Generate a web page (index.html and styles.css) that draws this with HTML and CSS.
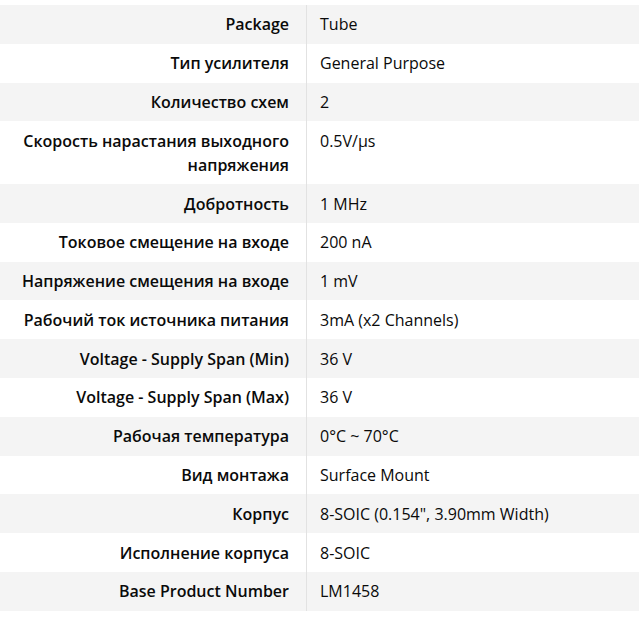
FILE: index.html
```html
<!DOCTYPE html>
<html lang="ru">
<head>
<meta charset="utf-8">
<link rel="stylesheet" href="styles.css">
</head>
<body>
<div class="wrap">
<table class="specs">
<tbody>
<tr><th>Package</th><td>Tube</td></tr>
<tr><th>Тип усилителя</th><td>General Purpose</td></tr>
<tr><th>Количество схем</th><td>2</td></tr>
<tr><th>Скорость нарастания выходного напряжения</th><td>0.5V/µs</td></tr>
<tr><th>Добротность</th><td>1 MHz</td></tr>
<tr><th>Токовое смещение на входе</th><td>200 nA</td></tr>
<tr><th>Напряжение смещения на входе</th><td>1 mV</td></tr>
<tr><th>Рабочий ток источника питания</th><td>3mA (x2 Channels)</td></tr>
<tr><th>Voltage - Supply Span (Min)</th><td>36 V</td></tr>
<tr><th>Voltage - Supply Span (Max)</th><td>36 V</td></tr>
<tr><th>Рабочая температура</th><td>0°C ~ 70°C</td></tr>
<tr><th>Вид монтажа</th><td>Surface Mount</td></tr>
<tr><th>Корпус</th><td>8-SOIC (0.154", 3.90mm Width)</td></tr>
<tr><th>Исполнение корпуса</th><td>8-SOIC</td></tr>
<tr><th>Base Product Number</th><td>LM1458</td></tr>
</tbody>
</table>
</div>
</body>
</html>
```
FILE: styles.css
```css
html, body {
  margin: 0;
  padding: 0;
  background: #fff;
}
.wrap {
  padding-top: 5px;
}
.specs {
  width: 639px;
  border-collapse: collapse;
  font-family: "Open Sans", "Noto Sans", sans-serif;
  font-size: 16px;
  line-height: 24px;
  color: #0a0a0a;
}
.specs tr:nth-child(odd) {
  background: #f4f4f4;
}
.specs th {
  width: 272px;
  text-align: right;
  font-weight: 600;
  padding: 7.4px 17px 7.4px 17px;
  border-right: 1px solid #e2e2e2;
  vertical-align: top;
}
.specs td {
  text-align: left;
  font-weight: 400;
  padding: 7.4px 13px;
  vertical-align: top;
}
```
